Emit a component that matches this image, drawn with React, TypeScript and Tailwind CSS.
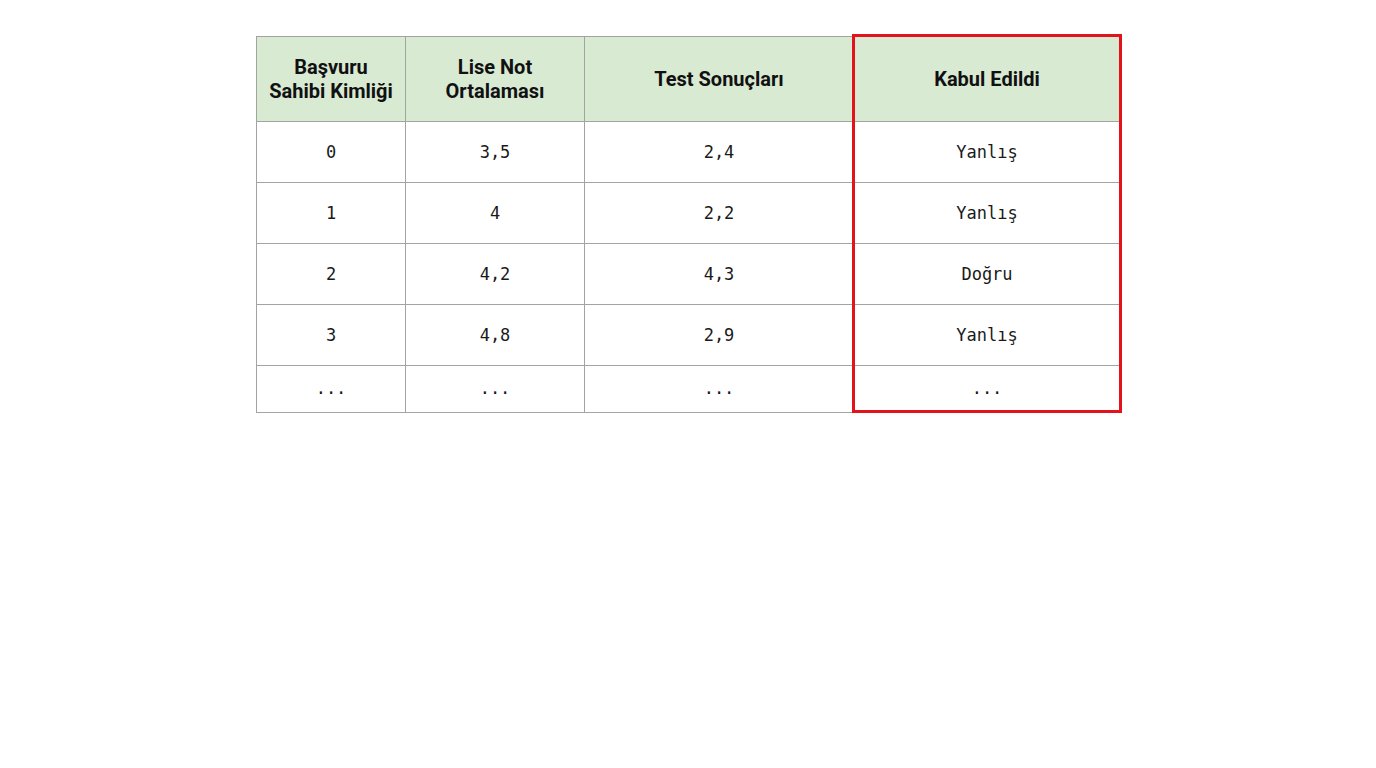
import React from 'react';

const headers = ['Başvuru Sahibi Kimliği', 'Lise Not Ortalaması', 'Test Sonuçları', 'Kabul Edildi'];

const rows = [
  ['0', '3,5', '2,4', 'Yanlış'],
  ['1', '4', '2,2', 'Yanlış'],
  ['2', '4,2', '4,3', 'Doğru'],
  ['3', '4,8', '2,9', 'Yanlış'],
];

const widths = ['w-[149px]', 'w-[179px]', 'w-[269px]', 'w-[267px]'];

const App: React.FC = () => {
  return (
    <div className="w-[1376px] h-[768px] bg-white">
      <div className="pl-[256px] pt-[36px]">
        <div className="relative w-[864px]">
          <table className="border-collapse table-fixed w-[864px]">
            <thead>
              <tr className="h-[85px] bg-[#d9ead3]">
                {headers.map((h, i) => (
                  <th
                    key={i}
                    className={`${widths[i]} border border-[#a3a3a3] px-2 text-center align-middle text-[20px] leading-[24px] font-bold text-[#111] font-['Roboto',sans-serif]`}
                  >
                    {i === 0 ? (<>Başvuru<br />Sahibi Kimliği</>) : i === 1 ? (<>Lise Not<br />Ortalaması</>) : h}
                  </th>
                ))}
              </tr>
            </thead>
            <tbody>
              {rows.map((r, ri) => (
                <tr key={ri} className="h-[61px]">
                  {r.map((c, ci) => (
                    <td
                      key={ci}
                      className="border border-[#a3a3a3] text-center align-middle pt-[2px] text-[17px] text-[#1a1a1a] font-['DejaVu_Sans_Mono','Liberation_Mono',monospace]"
                    >
                      {c}
                    </td>
                  ))}
                </tr>
              ))}
              <tr className="h-[47px]">
                {[0, 1, 2, 3].map((ci) => (
                  <td
                    key={ci}
                    className="border border-[#a3a3a3] text-center align-middle text-[17px] text-[#1a1a1a] font-['DejaVu_Sans_Mono','Liberation_Mono',monospace]"
                  >
                    ...
                  </td>
                ))}
              </tr>
            </tbody>
          </table>
          <div className="absolute left-[596px] top-[-2px] w-[270px] h-[379px] border-[3px] border-[#e3121b] pointer-events-none" />
        </div>
      </div>
    </div>
  );
};

export default App;
